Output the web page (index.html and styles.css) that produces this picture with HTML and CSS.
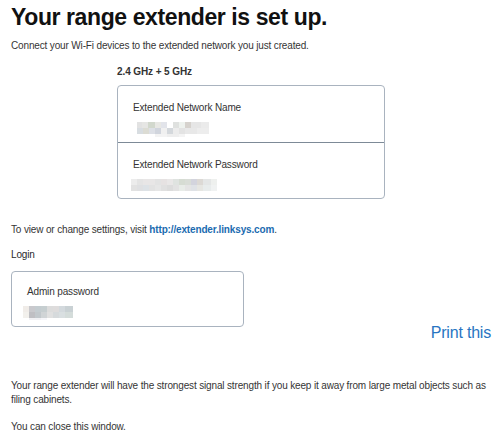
FILE: index.html
```html
<!DOCTYPE html>
<html lang="en">
<head>
<meta charset="utf-8">
<title>Your range extender is set up.</title>
<link rel="stylesheet" href="styles.css">
</head>
<body>
<div class="page">
  <h1 class="title">Your range extender is set up.</h1>
  <p class="intro">Connect your Wi-Fi devices to the extended network you just created.</p>

  <div class="network">
    <div class="band">2.4 GHz + 5 GHz</div>
    <div class="card card-network">
      <div class="field field-name">
        <div class="label">Extended Network Name</div>
        <div class="value"><span class="blur blur-name"></span></div>
      </div>
      <div class="field field-pass">
        <div class="label">Extended Network Password</div>
        <div class="value"><span class="blur blur-pass"></span></div>
      </div>
    </div>
  </div>

  <p class="settings">To view or change settings, visit <a class="link" href="#">http://extender.linksys.com</a>.</p>

  <div class="login-title">Login</div>
  <div class="login-row">
    <div class="card card-login">
      <div class="field field-admin">
        <div class="label">Admin password</div>
        <div class="value value-admin"><span class="blur blur-admin"></span></div>
      </div>
    </div>
    <a class="print" href="#">Print this</a>
  </div>

  <p class="tip">Your range extender will have the strongest signal strength if you keep it away from large metal objects such as filing cabinets.</p>
  <p class="close">You can close this window.</p>
</div>
</body>
</html>
```

FILE: styles.css
```css
* {
  box-sizing: border-box;
}

html, body {
  margin: 0;
  padding: 0;
  background: #ffffff;
}

body {
  font-family: "Liberation Sans", Arial, sans-serif;
  font-size: 10px;
  line-height: 14px;
  color: #353535;
  letter-spacing: -0.15px;
}

.page {
  padding: 0 8px 0 11px;
}

.title {
  margin: 4px 0 0;
  font-size: 23px;
  line-height: 27px;
  font-weight: bold;
  letter-spacing: -0.4px;
  color: #111111;
}

.intro {
  margin: 8px 0 0;
}

.network {
  margin-left: 106px;
}

.band {
  margin-top: 12px;
  font-weight: bold;
  color: #333333;
  letter-spacing: -0.1px;
}

.card {
  border: 1px solid #a9b3bf;
  border-radius: 4px;
  background: #ffffff;
}

.card-network {
  margin-top: 6px;
  width: 268px;
}

.field {
  padding: 15px 15px 5px;
}

.field-pass {
  border-top: 1px solid #7d8a97;
  padding: 15px 15px 4px;
}

.label {
  color: #333333;
}

.value {
  margin-top: 7px;
  height: 15px;
}

.blur {
  display: block;
}

.blur-name {
  width: 72px;
  height: 15px;
  margin-left: 4px;
  background:
    linear-gradient(90deg, #e2e2e2 0 5px, #e6e6e4 5px 11px, #d2d8cd 11px 18px, #e8e8e4 18px 24px, #e2e4ea 24px 30px, #ffffff 30px 36px, #dfe1df 36px 42px, #eef2ee 42px 48px, #d6d2cd 48px 54px, #e6e6e6 54px 64px, #ebebeb 64px 72px) 0 0 / 100% 6px no-repeat,
    linear-gradient(90deg, #d8dde1 0 6px, #dcdcd4 6px 12px, #dde0e6 12px 18px, #d1d5dd 18px 24px, #f0f0f0 24px 30px, #d4d8dc 30px 36px, #ececec 36px 42px, #e3e3e3 42px 48px, #e8e8e8 48px 60px, #ededed 60px 72px) 0 6px / 100% 6px no-repeat,
    linear-gradient(90deg, transparent 0 18px, #f3f3f3 18px 30px, #eeeeee 30px 42px, #f4f4f4 42px 48px, transparent 48px) 0 12px / 100% 3px no-repeat;
}

.blur-pass {
  width: 86px;
  height: 12px;
  margin-left: -2px;
  margin-top: 1px;
  background:
    linear-gradient(90deg, #ececec 0 6px, #e4e4e4 6px 12px, #e8e6e6 12px 24px, #e3e3e3 24px 30px, #e6e2e2 30px 36px, #e9e7e7 36px 42px, #dfe3e0 42px 48px, #d6dcd3 48px 54px, #d9ddd7 54px 60px, #d3d4dd 60px 66px, #dcd9d5 66px 72px, #e4e6e6 72px 80px, #eef0ee 80px 86px) 0 0 / 100% 6px no-repeat,
    linear-gradient(90deg, #e2e2e2 0 6px, #dfe0e2 6px 12px, #dde2e6 12px 18px, #e2e2e2 18px 24px, #e6e6e6 24px 30px, #e0e0e0 30px 36px, #dcdcdc 36px 42px, #e2e2e2 42px 48px, #e8ece8 48px 54px, #e4e4e4 54px 60px, #dfe2e6 60px 66px, #e6e6e2 66px 72px, #e8ecec 72px 80px, #f0f2f2 80px 86px) 0 6px / 100% 6px no-repeat;
}

.login-title {
  margin-top: 11px;
  color: #2a2a2a;
}

.login-row {
  margin-top: 9px;
  display: flex;
  justify-content: space-between;
  align-items: flex-start;
}

.card-login {
  width: 233px;
}

.field-admin {
  padding: 13px 15px 7px;
}

.value-admin {
  height: 13px;
}

.blur-admin {
  width: 50px;
  height: 14px;
  margin-left: -4px;
  background:
    linear-gradient(90deg, #f0ece8 0 6px, #c9c9cd 6px 12px, #c4ccd0 12px 18px, #c6ced0 18px 24px, #dcdcdc 24px 30px, #dedcdc 30px 36px, #d3d9dd 36px 42px, #c9d1d4 42px 50px) 0 0 / 100% 6px no-repeat,
    linear-gradient(90deg, #f2f0ec 0 6px, #bfbfc3 6px 12px, #c2c8cc 12px 18px, #d0d4d6 18px 24px, #e0e0e0 24px 30px, #d6dadc 30px 36px, #d9dfe1 36px 42px, #d4dcda 42px 50px) 0 6px / 100% 6px no-repeat,
    linear-gradient(90deg, transparent 0 6px, #f1f1f4 6px 18px, #f6f6fa 18px 24px, transparent 24px) 0 12px / 100% 2px no-repeat;
}

.settings {
  margin: 24px 0 0;
}

.link {
  color: #1b6bb0;
  font-weight: bold;
  text-decoration: none;
}

.print {
  margin-top: 53px;
  font-size: 16px;
  line-height: 18px;
  letter-spacing: -0.2px;
  color: #2875c2;
  text-decoration: none;
}

.tip {
  margin: 37px 0 0;
}

.close {
  margin: 13px 0 0;
}
```
